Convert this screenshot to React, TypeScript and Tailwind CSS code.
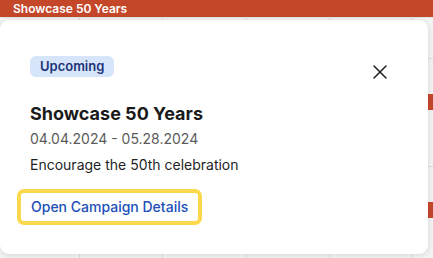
import { X } from "lucide-react";

const gridLines = [80, 163, 247, 330, 413];

const CalendarBackdrop = () => {
  return (
    <div className="flex h-full w-full flex-col">
      <div className="flex h-[17px] items-center bg-[#c4472a] px-[13px] text-[12px] font-semibold leading-none text-white">
        Showcase 50 Years
      </div>
      <div className="grid flex-1 grid-cols-[80px_83px_84px_83px_83px_20px] border-t border-[#e2e2e2] bg-[#f3f3f3]">
        {gridLines.map((x) => (
          <div key={x} className="border-r border-[#dcdcdc]" />
        ))}
        <div className="flex flex-col">
          <div className="h-[41px] border-b border-[#dddddd]" />
          <div className="mt-[35px] h-[16px] bg-[#c4472a]" />
          <div className="h-[57px] border-b border-[#dddddd]" />
          <div className="mt-[35px] h-[16px] bg-[#c4472a]" />
        </div>
      </div>
    </div>
  );
};

const CampaignPopover = () => {
  return (
    <div className="absolute left-0 top-[20px] flex h-[234px] w-[428px] flex-col items-start rounded-[9px] bg-white pl-[30px] pr-[42px] pt-[36px] shadow-[0_1px_6px_rgba(0,0,0,0.12)]">
      <span className="rounded-md bg-[#d7e5fb] px-[10px] py-[2px] text-[13px] font-semibold leading-[17px] text-[#1b3378]">
        Upcoming
      </span>
      <button className="absolute right-[36px] top-[40px] text-[#1f1f1f]">
        <X size={24} strokeWidth={1.5} />
      </button>
      <h3 className="mt-[25px] text-[18px] font-bold leading-[24px] text-[#1a1a1a]">
        Showcase 50 Years
      </h3>
      <p className="mt-[3px] text-[14px] leading-[20px] text-[#5b5b5b]">
        04.04.2024 - 05.28.2024
      </p>
      <p className="mt-[6px] text-[14px] leading-[20px] text-[#1f1f1f]">
        Encourage the 50th celebration
      </p>
      <button className="-ml-[13px] mt-[14px] rounded-[7px] border-[4px] border-[#fcd94c] bg-white px-[10px] py-[3px] text-[14px] font-medium leading-[22px] text-[#2150b8]">
        Open Campaign Details
      </button>
    </div>
  );
};

export default function App() {
  return (
    <div
      className="relative h-[258px] w-[433px] overflow-hidden bg-[#f3f3f3]"
      style={{ fontFamily: "Inter, 'Noto Sans', sans-serif" }}
    >
      <CalendarBackdrop />
      <CampaignPopover />
    </div>
  );
}
